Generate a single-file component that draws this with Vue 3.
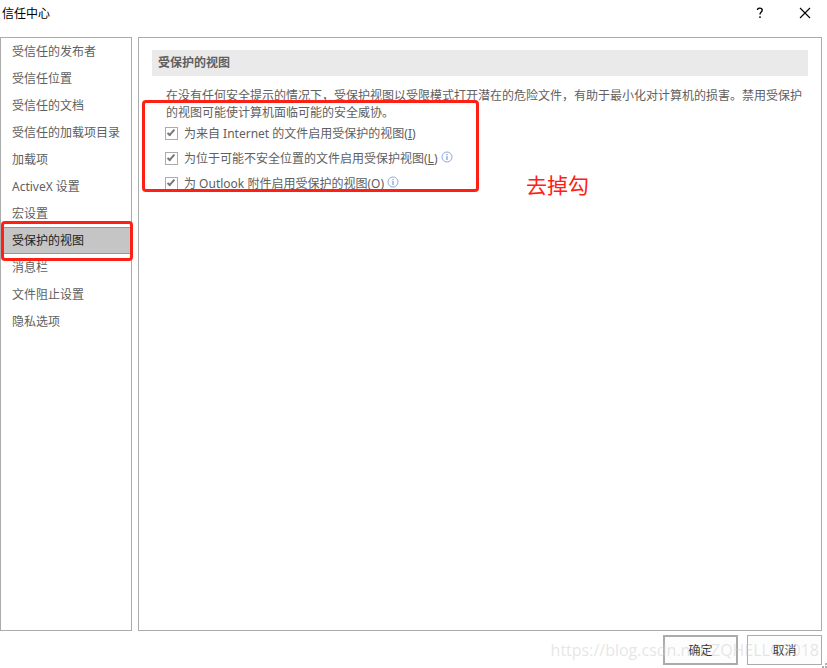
<script setup>
import { ref } from 'vue'

const activePage = ref('受保护的视图')

const pages = [
  '受信任的发布者',
  '受信任位置',
  '受信任的文档',
  '受信任的加载项目录',
  '加载项',
  'ActiveX 设置',
  '宏设置',
  '受保护的视图',
  '消息栏',
  '文件阻止设置',
  '隐私选项'
]

const options = ref([
  { id: 'internet', label: '为来自 Internet 的文件启用受保护的视图', accessKey: 'I', info: false, checked: true },
  { id: 'location', label: '为位于可能不安全位置的文件启用受保护视图', accessKey: 'L', info: true, checked: true },
  { id: 'outlook', label: '为 Outlook 附件启用受保护的视图', accessKey: 'O', info: true, checked: true }
])
</script>

<template>
  <div class="dialog">
    <header class="title-bar">
      <h1 class="title">信任中心</h1>
      <button type="button" class="title-button" aria-label="帮助">
        <svg width="8" height="12" viewBox="0 0 8 12" fill="none" stroke="#000" stroke-width="1.4">
          <path d="M1.6 3V2.2Q2.2 1.1 3.8 1.1Q6.2 1.1 6.2 3.1Q6.2 4.3 5 5.2Q4 6 4 7.6" />
          <path d="M4 9.2V11" />
        </svg>
      </button>
      <button type="button" class="title-button" aria-label="关闭">
        <svg width="12" height="12" viewBox="0 0 12 12" fill="none" stroke="#000" stroke-width="1.1">
          <path d="M1 1L11 11M11 1L1 11" />
        </svg>
      </button>
    </header>

    <div class="body">
      <nav class="sidebar">
        <div v-for="page in pages" :key="page" class="nav-row">
          <button
            type="button"
            class="nav-item"
            :class="{ active: page === activePage }"
            @click="activePage = page"
          >
            {{ page }}
          </button>
          <span v-if="page === '受保护的视图'" class="mark mark-nav"></span>
        </div>
      </nav>

      <main class="content">
        <h2 class="section-title">受保护的视图</h2>
        <div class="section">
          <p class="description">
            在没有任何安全提示的情况下，受保护视图以受限模式打开潜在的危险文件，有助于最小化对计算机的损害。禁用受保护的视图可能使计算机面临可能的安全威协。
          </p>
          <div v-for="option in options" :key="option.id" class="option">
            <input :id="option.id" v-model="option.checked" type="checkbox" class="checkbox" />
            <label :for="option.id" class="option-label">{{ option.label }}(<u>{{ option.accessKey }}</u>)</label>
            <svg v-if="option.info" class="info" width="12" height="12" viewBox="0 0 12 12" fill="none">
              <circle cx="6" cy="6" r="5" stroke="#8eabdb" />
              <path d="M6 5V9M6 3V4.2" stroke="#5f86c4" />
            </svg>
          </div>
          <span class="mark mark-options"></span>
          <span class="note">去掉勾</span>
        </div>
      </main>
    </div>

    <footer class="footer">
      <button type="button" class="button primary">确定</button>
      <button type="button" class="button">取消</button>
      <span class="watermark">https://blog.csdn.net/ZQHELLO2018</span>
      <svg class="grip" width="5" height="5" viewBox="0 0 5 5" fill="#b0b0b0">
        <path d="M3 0H5V2H3ZM0 3H2V5H0ZM3 3H5V5H3Z" />
      </svg>
    </footer>
  </div>
</template>

<style>
body {
  margin: 0;
  background: #fff;
}
</style>

<style scoped>
.dialog {
  display: flex;
  flex-direction: column;
  box-sizing: border-box;
  min-height: 100vh;
  font-family: "Noto Sans", "Noto Sans CJK SC", sans-serif;
  font-size: 12px;
  color: #606060;
}

button {
  font: inherit;
  color: inherit;
}

/* ===== Title bar ===== */
.title-bar {
  display: flex;
  align-items: center;
  height: 25px;
  padding: 0 0 12px 2px;
}

.title {
  flex: 1;
  margin: 0;
  font-size: 12px;
  font-weight: 400;
  color: #000;
}

.title-button {
  display: flex;
  align-items: center;
  justify-content: center;
  width: 45px;
  height: 24px;
  padding: 0;
  border: none;
  background: transparent;
}

/* ===== Panels ===== */
.body {
  display: flex;
  flex: 1;
  gap: 6px;
  padding-right: 5px;
}

.sidebar,
.content {
  box-sizing: border-box;
  border: 1px solid #ababab;
}

.sidebar {
  flex: 0 0 132px;
}

.nav-row {
  position: relative;
}

.nav-item {
  display: block;
  box-sizing: border-box;
  width: 100%;
  height: 27px;
  padding: 0 0 0 11px;
  border: 1px solid transparent;
  border-width: 1px 0;
  background: transparent;
  line-height: 25px;
  text-align: left;
  white-space: nowrap;
}

.nav-item.active {
  border-color: #8e9a98;
  background: #c5c5c5;
  color: #222;
}

.content {
  flex: 1;
  min-width: 0;
  padding: 12px 13px;
}

.section-title {
  margin: 0 0 11px;
  padding: 0 6px;
  background: #eaeaea;
  font-size: 12px;
  line-height: 26px;
}

.section {
  position: relative;
  padding-left: 13px;
}

.description {
  margin: 0;
  padding-left: 1px;
  line-height: 17px;
}

/* ===== Options ===== */
.option {
  display: flex;
  align-items: center;
  height: 25px;
}

.checkbox {
  appearance: none;
  box-sizing: border-box;
  flex: none;
  width: 13px;
  height: 13px;
  margin: 0 6px 0 0;
  border: 1px solid #ababab;
  background: #fff;
}

.checkbox:checked::before {
  content: "";
  display: block;
  width: 8px;
  height: 4px;
  margin: 1px 0 0 1px;
  border: solid #777;
  border-width: 0 0 2px 2px;
  box-sizing: border-box;
  transform: translateY(1px) rotate(-48deg);
}

.option-label {
  padding-bottom: 2px;
}

.info {
  margin: 0 0 4px 3px;
}

/* ===== Red annotations ===== */
.mark {
  position: absolute;
  box-sizing: border-box;
  border: 3px solid #ff2015;
  border-radius: 4px;
  pointer-events: none;
}

.mark-nav {
  inset: -6px -2px -7px 0;
  z-index: 1;
}

.mark-options {
  top: 13px;
  left: -10px;
  width: 337px;
  height: 92px;
}

.note {
  position: absolute;
  top: 83px;
  left: 374px;
  font-size: 21px;
  line-height: 30px;
  color: #ff2015;
}

/* ===== Footer ===== */
.footer {
  position: relative;
  display: flex;
  justify-content: flex-end;
  gap: 9px;
  padding: 4px 5px 3px;
}

.button {
  width: 75px;
  height: 30px;
  padding: 0;
  border: 1px solid #ababab;
  background: #fdfdfd;
  color: #333;
}

.button.primary {
  border-width: 2px;
}

.watermark {
  position: absolute;
  right: 8px;
  top: 8px;
  font-family: "Open Sans", sans-serif;
  font-size: 16px;
  line-height: 22px;
  color: rgba(205, 205, 205, 0.5);
  pointer-events: none;
}

.grip {
  position: absolute;
  right: 0;
  bottom: 0;
}
</style>
